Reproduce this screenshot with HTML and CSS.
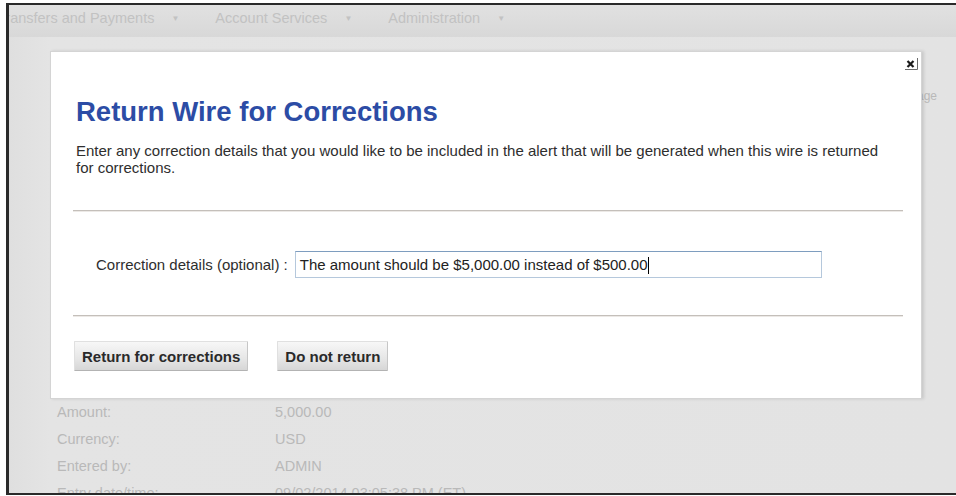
FILE: index.html
```html
<!DOCTYPE html>
<html lang="en">
<head>
<meta charset="utf-8">
<title>Return Wire for Corrections</title>
<link rel="stylesheet" href="styles.css">
</head>
<body>
<div class="frame">
  <nav class="menu">
    <span class="menu-item menu-item--first">Transfers and Payments<span class="caret">&#9660;</span></span>
    <span class="menu-item">Account Services<span class="caret">&#9660;</span></span>
    <span class="menu-item">Administration<span class="caret">&#9660;</span></span>
  </nav>

  <main class="page">
    <div class="page-tools">Print page</div>
    <div class="details">
      <span class="details-label">Amount:</span><span class="details-value">5,000.00</span>
      <span class="details-label">Currency:</span><span class="details-value">USD</span>
      <span class="details-label">Entered by:</span><span class="details-value">ADMIN</span>
      <span class="details-label">Entry date/time:</span><span class="details-value">09/02/2014 03:05:38 PM (ET)</span>
    </div>
  </main>

  <section class="dialog" role="dialog" aria-labelledby="dlg-title">
    <div class="dialog-top">
      <button class="close" type="button" aria-label="Close">
        <svg width="15" height="14" viewBox="0 0 15 14">
          <path d="M3.5 4 L9.5 10 M9.5 4 L3.5 10" stroke="#1a1a1a" stroke-width="2.2" fill="none"/>
          <path d="M1 12.5 H13.5 V1" stroke="#6b6b6b" stroke-width="1" fill="none"/>
        </svg>
      </button>
    </div>
    <h1 class="dialog-title" id="dlg-title">Return Wire for Corrections</h1>
    <p class="dialog-intro">Enter any correction details that you would like to be included in the alert that will be generated when this wire is returned for corrections.</p>
    <hr class="rule rule--top">
    <div class="field">
      <label class="field-label" for="details">Correction details (optional) :</label>
      <div class="field-input" id="details">The amount should be $5,000.00 instead of $500.00<span class="cursor"></span></div>
    </div>
    <hr class="rule">
    <div class="actions">
      <button class="btn" type="button">Return for corrections</button>
      <button class="btn" type="button">Do not return</button>
    </div>
  </section>
</div>
</body>
</html>
```

FILE: styles.css
```css
html, body {
  margin: 0;
  padding: 0;
  background: #ffffff;
}

body {
  font-family: "Liberation Sans", Arial, sans-serif;
  font-size: 15px;
  color: #333333;
}

/* screen frame */
.frame {
  position: relative;
  margin: 3px 0 0 6px;
  height: 488px;
  border-top: 2px solid #2a2a2a;
  border-left: 3px solid #2a2a2a;
  border-bottom: 2px solid #2a2a2a;
  background: #e3e3e3;
  overflow: hidden;
  display: flex;
  flex-direction: column;
}

/* top navigation (dimmed behind the dialog) */
.menu {
  flex: 0 0 32px;
  display: flex;
  align-items: center;
  gap: 36px;
  padding-bottom: 6px;
  box-sizing: border-box;
  background: linear-gradient(#e1e1e1, #d8d8d8);
  color: #c2c2c2;
  font-size: 14.5px;
  white-space: nowrap;
}

.menu-item--first {
  margin-left: -12px;
}

.caret {
  font-size: 8px;
  margin-left: 17px;
  vertical-align: 2px;
}

/* page body */
.page {
  flex: 1;
  background: linear-gradient(to right, #dfdfdf 0, #e4e4e4 40px, #e3e3e3 100%);
  color: #b9b9b9;
  font-size: 14.5px;
  display: flex;
  flex-direction: column;
}

.page-tools {
  align-self: flex-end;
  margin: 52px 19px 0 0;
  font-size: 12px;
  line-height: 14px;
}

.details {
  margin: 301px 0 0 48px;
  display: grid;
  grid-template-columns: 218px auto;
  row-gap: 10px;
  line-height: 17px;
}

/* modal dialog */
.dialog {
  position: absolute;
  left: 41px;
  top: 46px;
  width: 872px;
  height: 348px;
  box-sizing: border-box;
  background: #ffffff;
  border: 1px solid #d4d4d4;
  box-shadow: 2px 0 3px rgba(0, 0, 0, 0.12);
  padding: 0 18px 0 22px;
}

.dialog-top {
  display: flex;
  justify-content: flex-end;
  height: 44px;
  padding-top: 5px;
  box-sizing: border-box;
}

.close {
  width: 15px;
  height: 14px;
  padding: 0;
  margin-right: -16px;
  border: 0;
  background: transparent;
  display: block;
}

.close svg {
  display: block;
}

.dialog-title {
  margin: 0 0 0 3px;
  font-size: 27.5px;
  line-height: 32px;
  font-weight: bold;
  color: #2c4ca5;
}

.dialog-intro {
  margin: 14px 0 0 3px;
  max-width: 815px;
  line-height: 17px;
  font-size: 15px;
  color: #2e2e2e;
}

.rule {
  margin: 0;
  border: 0;
  height: 2px;
  background: linear-gradient(#c4bfba 0, #c4bfba 1px, #ece9e6 1px);
}

.rule--top {
  margin-top: 34px;
}

.field {
  display: flex;
  align-items: center;
  margin: 39px 0 37px 23px;
  gap: 7px;
}

.field-label {
  color: #2e2e2e;
}

.field-input {
  width: 527px;
  height: 27px;
  box-sizing: border-box;
  padding: 0 4px;
  line-height: 25px;
  border: 1px solid #b5c8dc;
  border-top-color: #7e9dbf;
  color: #222222;
  white-space: nowrap;
}

.cursor {
  display: inline-block;
  width: 1px;
  height: 17px;
  background: #000000;
  vertical-align: -4px;
}

.actions {
  display: flex;
  gap: 29px;
  margin-top: 24px;
  padding-left: 1px;
}

.btn {
  height: 30px;
  padding: 0 7px;
  font-family: inherit;
  font-size: 15px;
  font-weight: bold;
  color: #2a2a2a;
  background: linear-gradient(#f7f7f7, #e6e6e6 60%, #d6d6d6);
  border: 1px solid #e0e0e0;
  border-bottom-color: #b3b3b3;
  border-right-color: #c6c6c6;
  border-radius: 1px;
}
```
